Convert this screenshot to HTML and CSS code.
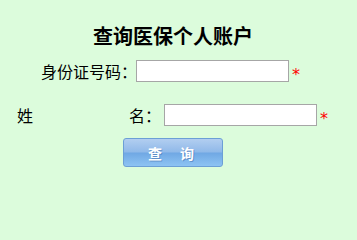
FILE: index.html
```html
<!DOCTYPE html>
<html lang="zh-CN">
<head>
<meta charset="utf-8">
<title>查询医保个人账户</title>
<link rel="stylesheet" href="styles.css">
</head>
<body>
<div class="page">
  <h1 class="title">查询医保个人账户</h1>
  <div class="row row-id">
    <span class="label-id">身份证号码：</span>
    <input class="field" type="text">
    <span class="star">*</span>
  </div>
  <div class="row row-name">
    <span class="label-first">姓</span>
    <span class="label-last">名：</span>
    <input class="field" type="text">
    <span class="star">*</span>
  </div>
  <div class="actions">
    <button class="btn" type="button"><span>查</span><span>询</span></button>
  </div>
</div>
</body>
</html>
```
FILE: styles.css
```css
html, body {
  margin: 0;
  padding: 0;
  background: #dcfcdc;
}
body {
  width: 357px;
  height: 203px;
  overflow: hidden;
  font-family: "Noto Sans CJK SC", "Noto Sans", sans-serif;
  color: #000;
}
.page {
  padding-top: 24px;
}
.title {
  margin: 0;
  padding-left: 93px;
  font-size: 20px;
  line-height: 24px;
  font-weight: bold;
}
.row {
  display: flex;
  align-items: center;
  height: 22px;
  font-size: 16px;
  line-height: 16px;
}
.row-id {
  margin-top: 12px;
  padding-left: 41px;
}
.label-id {
  width: 95px;
  white-space: nowrap;
}
.row-name {
  margin-top: 22px;
  padding-left: 17px;
}
.label-first {
  width: 112px;
}
.label-last {
  width: 35px;
  white-space: nowrap;
}
.field {
  box-sizing: border-box;
  width: 153px;
  height: 22px;
  margin: 0;
  padding: 0 2px;
  border: 1px solid #a6a6a6;
  background: #fff;
  outline: none;
}
.star {
  display: block;
  margin-left: 3px;
  margin-top: 8px;
  color: #ff0000;
  font-family: "DejaVu Sans", sans-serif;
  font-size: 16px;
  line-height: 16px;
}
.actions {
  margin-top: 12px;
  padding-left: 123px;
}
.btn {
  box-sizing: border-box;
  display: flex;
  align-items: center;
  justify-content: center;
  gap: 18px;
  width: 100px;
  height: 29px;
  margin: 0;
  padding: 0 4px 0 0;
  border: 1px solid #6c9fd6;
  border-radius: 3px;
  background: linear-gradient(to bottom, #b2cef0 0%, #90b9e9 48%, #70a8e4 52%, #8dc3f3 100%);
  color: #fff;
  font-family: "Noto Sans CJK SC", sans-serif;
  font-size: 14px;
  font-weight: bold;
  line-height: 14px;
  text-shadow: 1px 1px 0 rgba(60, 100, 160, 0.45);
}
```
